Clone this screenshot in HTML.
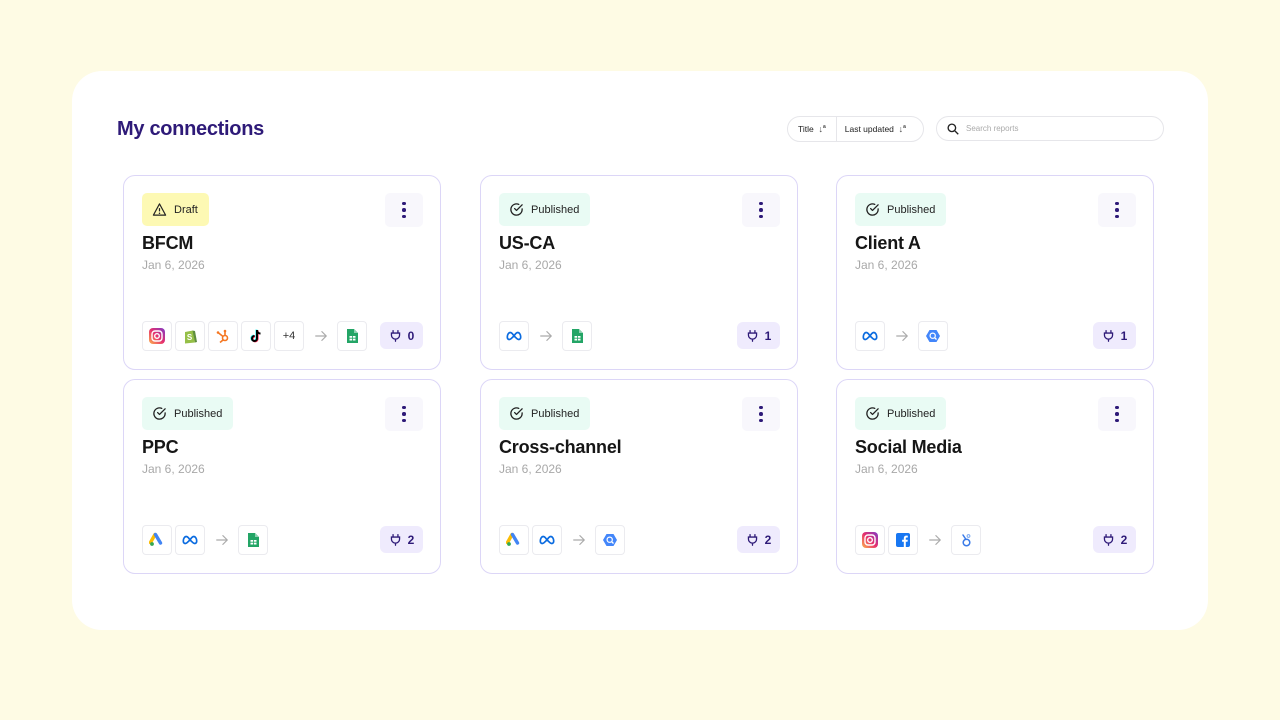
<!DOCTYPE html>
<html><head><meta charset="utf-8"><style>
*{box-sizing:border-box;margin:0;padding:0}
body{width:1280px;height:720px;background:#fefbe4;font-family:"Liberation Sans",sans-serif;position:relative;overflow:hidden}
.panel{position:absolute;left:72px;top:71px;width:1136px;height:559px;background:#fff;border-radius:30px}
h1{position:absolute;left:117px;top:118px;font-size:20px;font-weight:bold;color:#2e1a78;letter-spacing:-0.3px}
.sort{position:absolute;left:787px;top:116px;width:137px;height:26px;border:1px solid #e6e6ea;border-radius:13px;font-size:8.5px;color:#222;display:flex;align-items:center}
.sort span{display:flex;align-items:center;height:100%}
.search{position:absolute;left:936px;top:116px;width:228px;height:25px;border:1px solid #e6e6ea;border-radius:13px;font-size:8px;color:#aaa;display:flex;align-items:center;padding-left:10px}
.card{position:absolute;width:318px;height:195px;border:1.5px solid #dcd6f7;border-radius:12px;background:#fff}
.badge{position:absolute;left:18px;top:17px;height:33px;border-radius:5px;font-size:11px;color:#222;display:flex;align-items:center;padding:0 11px 0 10px;gap:7px}
.draft{background:#fdf9b4}
.pub{background:#e9fbf4}
.menu{position:absolute;right:17px;top:17px;width:38px;height:34px;background:#f8f7fc;border-radius:5px;display:flex;flex-direction:column;align-items:center;justify-content:center;gap:3px}
.menu i{width:3.5px;height:3.5px;border-radius:50%;background:#2e1a78;display:block}
.t{position:absolute;left:18px;top:57px;font-size:18px;font-weight:bold;color:#161616;letter-spacing:-0.2px}
.d{position:absolute;left:18px;top:82px;font-size:12px;color:#a8a8a8}
.icons{position:absolute;left:18px;top:145px;display:flex;gap:3px;align-items:center}
.ic{width:30px;height:30px;border:1px solid #ebebef;border-radius:4px;display:flex;align-items:center;justify-content:center;font-size:11px;color:#333;background:#fff}
.ar{width:27px;height:30px;display:flex;align-items:center;justify-content:center}
.cnt{position:absolute;right:17px;top:146px;width:43px;height:27px;background:#efebfd;border-radius:6px;display:flex;align-items:center;justify-content:center;gap:6px;font-size:12px;font-weight:bold;color:#2e1a78}
</style></head><body>
<svg width="0" height="0" style="position:absolute">
<defs>
<linearGradient id="ig" x1="0" y1="1" x2="1" y2="0"><stop offset="0" stop-color="#fdb24d"/><stop offset=".5" stop-color="#e6306e"/><stop offset="1" stop-color="#7d3ac8"/></linearGradient>
<symbol id="s-ig" viewBox="0 0 16 16"><rect width="16" height="16" rx="4" fill="url(#ig)"/><rect x="3" y="3" width="10" height="10" rx="3" fill="none" stroke="#fff" stroke-width="1.4"/><circle cx="8" cy="8" r="2.3" fill="none" stroke="#fff" stroke-width="1.4"/></symbol>
<symbol id="s-sh" viewBox="0 0 16 16"><path d="M3 4l8-1.5 2 12-10 1z" fill="#95bf47"/><path d="M10.5 2.5l2.5 12 2-.5-2-11z" fill="#5e8e3e"/><text x="7.5" y="12" font-size="8" font-weight="bold" fill="#fff" text-anchor="middle" font-family="Liberation Sans">S</text></symbol>
<symbol id="s-hs" viewBox="0 0 16 16"><g stroke="#f57722" stroke-width="1.6" fill="none"><circle cx="10" cy="10" r="2.5"/><path d="M10 7.5V3M8 8.5L3 4.5M8 12l-3 2.5"/></g><circle cx="10" cy="3" r="1.3" fill="#f57722"/><circle cx="3" cy="4.5" r="1.3" fill="#f57722"/></symbol>
<symbol id="s-tt" viewBox="0 0 16 16"><path d="M9 2v8.5a2.5 2.5 0 1 1-2.5-2.5" fill="none" stroke="#25f4ee" stroke-width="2" transform="translate(-.6 -.4)"/><path d="M9 2v8.5a2.5 2.5 0 1 1-2.5-2.5" fill="none" stroke="#fe2c55" stroke-width="2" transform="translate(.6 .4)"/><path d="M9 2v8.5a2.5 2.5 0 1 1-2.5-2.5M9 2c0 2 1.5 3.5 3.5 3.5" fill="none" stroke="#000" stroke-width="2"/></symbol>
<symbol id="s-gs" viewBox="0 0 16 16"><path d="M3 1h7l4 4v10H3z" fill="#23a566"/><path d="M10 1v4h4z" fill="#8ed1b1"/><rect x="5.5" y="8" width="6" height="4.5" fill="#fff"/><path d="M5.5 10.2h6M8.5 8v4.5" stroke="#23a566" stroke-width=".8"/></symbol>
<symbol id="s-meta" viewBox="0 0 16 16"><path d="M8 8C6.5 5.5 5.5 4.5 4.3 4.5 2.7 4.5 1.3 6.5 1.3 9c0 1.5.8 2.5 2 2.5C5 11.5 6.5 9 8 8c1.5-2.5 2.5-3.5 3.7-3.5 1.6 0 3 2 3 4.5 0 1.5-.8 2.5-2 2.5C11 11.5 9.5 9 8 8z" fill="none" stroke="#0a6be0" stroke-width="1.7"/></symbol>
<symbol id="s-bq" viewBox="0 0 16 16"><path d="M4.5 2h7l3.5 6-3.5 6h-7L1 8z" fill="#4386fa"/><circle cx="7.7" cy="7.7" r="2.6" fill="none" stroke="#fff" stroke-width="1.2"/><path d="M9.5 9.5l2 2" stroke="#fff" stroke-width="1.3"/></symbol>
<symbol id="s-ga" viewBox="0 0 16 16"><path d="M6 2.5l-4.5 8" stroke="#fbbc04" stroke-width="3.4" stroke-linecap="round"/><path d="M6.5 2.5l5 8.5" stroke="#4285f4" stroke-width="3.4" stroke-linecap="round"/><circle cx="3" cy="12" r="1.9" fill="#34a853"/></symbol>
<symbol id="s-fb" viewBox="0 0 16 16"><rect x="1" y="1" width="14" height="14" rx="2" fill="#1877f2"/><path d="M10.8 15V9.8h1.7l.3-2h-2V6.5c0-.6.2-1 1-1h1V3.7c-.2 0-.8-.1-1.5-.1-1.5 0-2.5.9-2.5 2.6v1.6H7.1v2h1.7V15z" fill="#fff"/></symbol>
<symbol id="s-lk" viewBox="0 0 16 16"><circle cx="8.5" cy="10.5" r="3.3" fill="none" stroke="#3a7be8" stroke-width="1.5"/><path d="M5 3l3 4.5" stroke="#3a7be8" stroke-width="1.5" stroke-linecap="round"/><circle cx="10.5" cy="4" r="1.4" fill="none" stroke="#7aa8f0" stroke-width="1"/></symbol>
<symbol id="s-plug" viewBox="0 0 16 16"><path d="M5 2v3M11 2v3M3 5h10v2.5a5 5 0 0 1-10 0zM8 12.5V15" fill="none" stroke="#2e1a78" stroke-width="1.6" stroke-linecap="round"/></symbol>
<symbol id="s-chk" viewBox="0 0 16 16"><path d="M14 7.3V8a6 6 0 1 1-3.6-5.5" fill="none" stroke="#222" stroke-width="1.4" stroke-linecap="round"/><path d="M14 3L8 9 6 7" fill="none" stroke="#222" stroke-width="1.4" stroke-linecap="round" stroke-linejoin="round"/></symbol>
<symbol id="s-warn" viewBox="0 0 16 16"><path d="M8 2L1.5 14h13z" fill="none" stroke="#222" stroke-width="1.3" stroke-linejoin="round"/><path d="M8 6.5v3.5" stroke="#222" stroke-width="1.3"/><circle cx="8" cy="12" r=".8" fill="#222"/></symbol>
<symbol id="s-ar" viewBox="0 0 16 16"><path d="M2 8h12M9 3l5 5-5 5" fill="none" stroke="#aaa" stroke-width="1.4" stroke-linecap="round" stroke-linejoin="round"/></symbol>
</defs></svg>
<div class="panel"></div>
<h1>My connections</h1>
<div class="sort"><span style="padding:0 10px;border-right:1px solid #e6e6ea">Title&nbsp;&nbsp;<b style="font-size:9px;color:#444">↓<sup style="font-size:5px">a</sup></b></span><span style="padding:0 8px">Last updated&nbsp;&nbsp;<b style="font-size:9px;color:#444">↓<sup style="font-size:5px">a</sup></b></span></div>
<div class="search"><svg width="12" height="12" viewBox="0 0 16 16"><circle cx="6.5" cy="6.5" r="5" fill="none" stroke="#222" stroke-width="1.8"/><path d="M10.5 10.5L15 15" stroke="#222" stroke-width="1.8"/></svg><span style="margin-left:7px">Search reports</span></div>

<div class="card" style="left:123px;top:175px">
<div class="badge draft"><svg width="15" height="15"><use href="#s-warn"/></svg>Draft</div>
<div class="menu"><i></i><i></i><i></i></div>
<div class="t">BFCM</div><div class="d">Jan 6, 2026</div>
<div class="icons"><div class="ic"><svg width="16" height="16"><use href="#s-ig"/></svg></div><div class="ic"><svg width="16" height="16"><use href="#s-sh"/></svg></div><div class="ic"><svg width="16" height="16"><use href="#s-hs"/></svg></div><div class="ic"><svg width="16" height="16"><use href="#s-tt"/></svg></div><div class="ic">+4</div><div class="ar"><svg width="14" height="14"><use href="#s-ar"/></svg></div><div class="ic"><svg width="16" height="16"><use href="#s-gs"/></svg></div></div>
<div class="cnt"><svg width="13" height="13"><use href="#s-plug"/></svg>0</div>
</div>

<div class="card" style="left:480px;top:175px">
<div class="badge pub"><svg width="15" height="15"><use href="#s-chk"/></svg>Published</div>
<div class="menu"><i></i><i></i><i></i></div>
<div class="t">US-CA</div><div class="d">Jan 6, 2026</div>
<div class="icons"><div class="ic"><svg width="16" height="16"><use href="#s-meta"/></svg></div><div class="ar"><svg width="14" height="14"><use href="#s-ar"/></svg></div><div class="ic"><svg width="16" height="16"><use href="#s-gs"/></svg></div></div>
<div class="cnt"><svg width="13" height="13"><use href="#s-plug"/></svg>1</div>
</div>

<div class="card" style="left:836px;top:175px">
<div class="badge pub"><svg width="15" height="15"><use href="#s-chk"/></svg>Published</div>
<div class="menu"><i></i><i></i><i></i></div>
<div class="t">Client A</div><div class="d">Jan 6, 2026</div>
<div class="icons"><div class="ic"><svg width="16" height="16"><use href="#s-meta"/></svg></div><div class="ar"><svg width="14" height="14"><use href="#s-ar"/></svg></div><div class="ic"><svg width="16" height="16"><use href="#s-bq"/></svg></div></div>
<div class="cnt"><svg width="13" height="13"><use href="#s-plug"/></svg>1</div>
</div>

<div class="card" style="left:123px;top:379px">
<div class="badge pub"><svg width="15" height="15"><use href="#s-chk"/></svg>Published</div>
<div class="menu"><i></i><i></i><i></i></div>
<div class="t">PPC</div><div class="d">Jan 6, 2026</div>
<div class="icons"><div class="ic"><svg width="16" height="16"><use href="#s-ga"/></svg></div><div class="ic"><svg width="16" height="16"><use href="#s-meta"/></svg></div><div class="ar"><svg width="14" height="14"><use href="#s-ar"/></svg></div><div class="ic"><svg width="16" height="16"><use href="#s-gs"/></svg></div></div>
<div class="cnt"><svg width="13" height="13"><use href="#s-plug"/></svg>2</div>
</div>

<div class="card" style="left:480px;top:379px">
<div class="badge pub"><svg width="15" height="15"><use href="#s-chk"/></svg>Published</div>
<div class="menu"><i></i><i></i><i></i></div>
<div class="t">Cross-channel</div><div class="d">Jan 6, 2026</div>
<div class="icons"><div class="ic"><svg width="16" height="16"><use href="#s-ga"/></svg></div><div class="ic"><svg width="16" height="16"><use href="#s-meta"/></svg></div><div class="ar"><svg width="14" height="14"><use href="#s-ar"/></svg></div><div class="ic"><svg width="16" height="16"><use href="#s-bq"/></svg></div></div>
<div class="cnt"><svg width="13" height="13"><use href="#s-plug"/></svg>2</div>
</div>

<div class="card" style="left:836px;top:379px">
<div class="badge pub"><svg width="15" height="15"><use href="#s-chk"/></svg>Published</div>
<div class="menu"><i></i><i></i><i></i></div>
<div class="t">Social Media</div><div class="d">Jan 6, 2026</div>
<div class="icons"><div class="ic"><svg width="16" height="16"><use href="#s-ig"/></svg></div><div class="ic"><svg width="16" height="16"><use href="#s-fb"/></svg></div><div class="ar"><svg width="14" height="14"><use href="#s-ar"/></svg></div><div class="ic"><svg width="16" height="16"><use href="#s-lk"/></svg></div></div>
<div class="cnt"><svg width="13" height="13"><use href="#s-plug"/></svg>2</div>
</div>
</body></html>
